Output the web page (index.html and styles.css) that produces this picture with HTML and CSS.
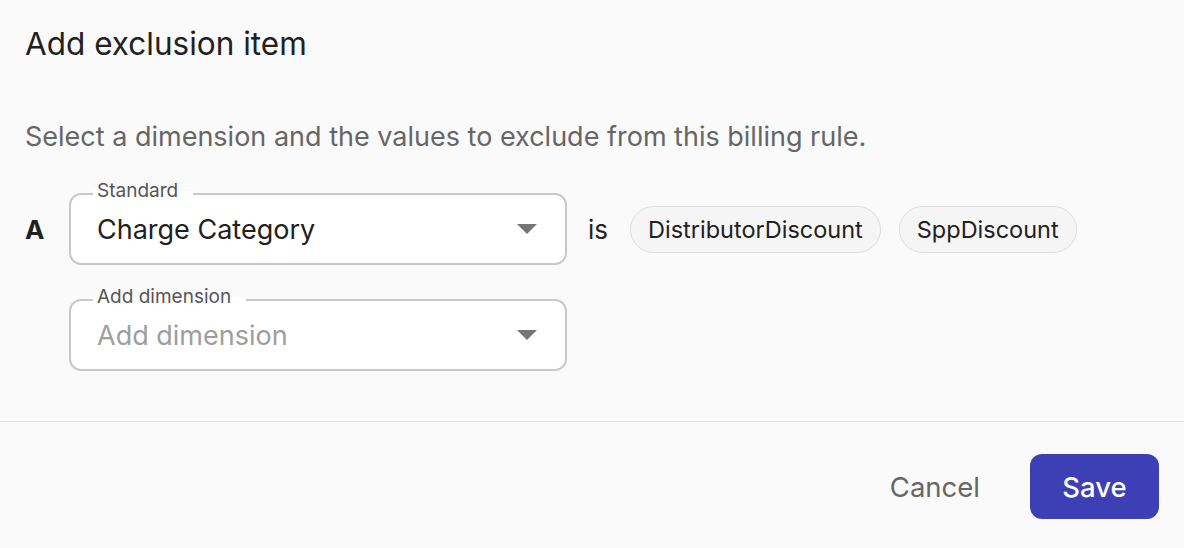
FILE: index.html
```html
<!DOCTYPE html>
<html>
<head>
<meta charset="utf-8">
<link rel="stylesheet" href="styles.css">
</head>
<body>
<div class="dialog">
  <div class="header"><h1 class="title">Add exclusion item</h1></div>
  <div class="content">
    <p class="subtitle">Select a dimension and the values to exclude from this billing rule.</p>
    <div class="row">
      <span class="letter">A</span>
      <div class="field">
        <span class="label">Standard</span>
        <span class="value">Charge Category</span>
        <svg class="caret" width="20" height="10" viewBox="0 0 20 10"><path d="M0 0h20L10 10z" fill="#757575"/></svg>
      </div>
      <span class="is">is</span>
      <div class="chips">
        <span class="chip">DistributorDiscount</span>
        <span class="chip">SppDiscount</span>
      </div>
    </div>
    <div class="row row2">
      <div class="field">
        <span class="label">Add dimension</span>
        <span class="value placeholder">Add dimension</span>
        <svg class="caret" width="20" height="10" viewBox="0 0 20 10"><path d="M0 0h20L10 10z" fill="#757575"/></svg>
      </div>
    </div>
  </div>
  <div class="footer">
    <button class="btn cancel">Cancel</button>
    <button class="btn save">Save</button>
  </div>
</div>
</body>
</html>
```
FILE: styles.css
```css
* { box-sizing: border-box; }
html, body { margin: 0; padding: 0; }
body {
  background: #fafafa;
  font-family: Inter, "Noto Sans", sans-serif;
  color: #212121;
  width: 1184px;
  height: 548px;
  overflow: hidden;
}
.dialog { display: flex; flex-direction: column; }
.header { padding: 24px 25px 0; }
.title {
  margin: 0;
  font-size: 31.5px;
  font-weight: 400;
  line-height: 40px;
  color: #212121;
}
.content { padding: 56px 25px 50px; }
.subtitle {
  margin: 0;
  font-size: 27px;
  line-height: 34px;
  color: #666;
}
.row { display: flex; align-items: center; margin-top: 39px; }
.row2 { margin-top: 34px; padding-left: 44px; }
.letter { width: 44px; font-size: 26px; font-weight: 700; color: #212121; }
.field {
  position: relative;
  width: 498px;
  height: 72px;
  border: 2px solid #c8c8c8;
  border-radius: 12px;
  background: #fff;
  display: flex;
  align-items: center;
  padding: 0 28px 0 26px;
}
.label {
  position: absolute;
  top: -17px;
  left: 22px;
  padding: 0 15px 0 4px;
  font-size: 19px;
  line-height: 26px;
  color: #555;
  background: linear-gradient(#fafafa 50%, #fff 50%);
}
.value { flex: 1; font-size: 27px; color: #212121; }
.placeholder { color: #9e9e9e; }
.caret { flex: none; }
.is { margin-left: 21px; font-size: 26px; color: #212121; }
.chips { display: flex; gap: 18px; margin-left: 22px; }
.chip {
  height: 47px;
  display: flex;
  align-items: center;
  padding: 0 17px;
  border: 1.5px solid #dedede;
  border-radius: 24px;
  background: #f5f5f5;
  font-size: 23.5px;
  color: #212121;
}
.footer {
  border-top: 1.5px solid #e0e0e0;
  display: flex;
  justify-content: flex-end;
  align-items: center;
  padding: 32px 25px 29px;
  gap: 34px;
}
.btn {
  font-family: inherit;
  font-size: 27.5px;
  border: none;
  background: none;
  cursor: pointer;
}
.cancel { color: #666; padding: 0 16px; height: 65px; }
.save {
  width: 129px;
  height: 65px;
  border-radius: 12px;
  background: #3c40b4;
  color: #fff;
  font-weight: 500;
}
```
